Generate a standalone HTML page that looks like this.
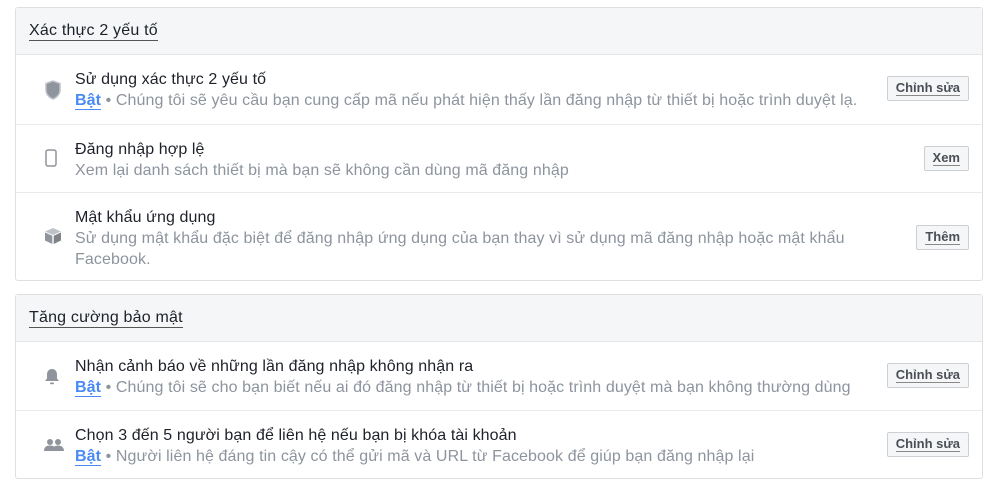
<!DOCTYPE html>
<html><head><meta charset="utf-8"><style>
*{box-sizing:border-box;margin:0;padding:0}
body{width:1000px;height:486px;background:#fff;font-family:"Liberation Sans",sans-serif;position:relative;overflow:hidden}
.p{position:absolute;left:15px;width:968px;border:1px solid #dddfe2;border-radius:3px;background:#fff}
.h{background:#f5f6f7;border-bottom:1px solid #e5e5e5;height:47px;padding:14px 0 0 13px;font-size:16px;color:#1d2129;letter-spacing:0.2px}
.h span{border-bottom:1px solid #555;padding-bottom:1px}
.r{position:relative;border-top:1px solid #e9ebee;padding:14px 110px 0 59px;font-size:16px;line-height:21px;letter-spacing:0.1px}
.t{color:#1d2129}
.d{color:#8d949e}
.b{color:#4a8af4;font-weight:bold;border-bottom:1px solid #4a8af4}
.btn{position:absolute;right:13px;height:25px;border:1px solid #ccd0d5;border-radius:2px;background:#f5f6f7;font-size:13px;font-weight:bold;color:#4b4f56;padding:0 8px;line-height:22px;letter-spacing:0}
.btn span{border-bottom:1px solid #888}
.ic{position:absolute;left:28px}
</style></head><body>
<div class="p" style="top:7px;height:274px">
<div class="h"><span>Xác thực 2 yếu tố</span></div>
<div class="r" style="height:69px;border-top:none"><svg class="ic" style="top:25px" width="18" height="20" viewBox="0 0 18 20"><path d="M9 1L2 3.5v6c0 4.5 3 7.8 7 9.5 4-1.7 7-5 7-9.5v-6z" fill="#90949c" stroke="#bec2c9" stroke-width="1.5"/></svg><div class="t">Sử dụng xác thực 2 yếu tố</div><div class="d"><span class="b">Bật</span> • Chúng tôi sẽ yêu cầu bạn cung cấp mã nếu phát hiện thấy lần đăng nhập từ thiết bị hoặc trình duyệt lạ.</div><div class="btn" style="top:21px"><span>Chỉnh sửa</span></div></div>
<div class="r" style="height:68px"><svg class="ic" style="top:24px" width="14" height="18"><rect x="2" y="1" width="10" height="16" rx="2" fill="none" stroke="#90949c" stroke-width="1.5"/></svg><div class="t">Đăng nhập hợp lệ</div><div class="d">Xem lại danh sách thiết bị mà bạn sẽ không cần dùng mã đăng nhập</div><div class="btn" style="top:21px"><span>Xem</span></div></div>
<div class="r" style="height:89px"><svg class="ic" style="top:34px" width="18" height="18" viewBox="0 0 18 18"><path d="M9 1l8 3.5-8 3.5-8-3.5z" fill="#bec2c9"/><path d="M1 5.5l7.3 3.2v8.3L1 13.5z" fill="#90949c"/><path d="M17 5.5l-7.3 3.2v8.3l7.3-3.5z" fill="#7f8389"/></svg><div class="t">Mật khẩu ứng dụng</div><div class="d">Sử dụng mật khẩu đặc biệt để đăng nhập ứng dụng của bạn thay vì sử dụng mã đăng nhập hoặc mật khẩu Facebook.</div><div class="btn" style="top:32px"><span>Thêm</span></div></div>
</div>
<div class="p" style="top:294px;height:185px">
<div class="h"><span>Tăng cường bảo mật</span></div>
<div class="r" style="height:68px;border-top:none"><svg class="ic" style="top:26px" width="16" height="18" viewBox="0 0 16 18"><path d="M8 1c-3 0-5 2.3-5 5.5v4L1 13h14l-2-2.5v-4C13 3.3 11 1 8 1z" fill="#90949c"/><rect x="6" y="14.5" width="4" height="1.8" rx=".9" fill="#90949c"/></svg><div class="t">Nhận cảnh báo về những lần đăng nhập không nhận ra</div><div class="d"><span class="b">Bật</span> • Chúng tôi sẽ cho bạn biết nếu ai đó đăng nhập từ thiết bị hoặc trình duyệt mà bạn không thường dùng</div><div class="btn" style="top:21px"><span>Chỉnh sửa</span></div></div>
<div class="r" style="height:68px"><svg class="ic" style="top:27px" width="20" height="14" viewBox="0 0 20 14"><circle cx="6" cy="4" r="3" fill="#90949c"/><circle cx="14" cy="4" r="3" fill="#90949c"/><path d="M0 13c0-4 2.5-5.5 6-5.5s6 1.5 6 5.5zM9 13c0-4 2-5.5 5-5.5s6 1.5 6 5.5z" fill="#90949c"/></svg><div class="t">Chọn 3 đến 5 người bạn để liên hệ nếu bạn bị khóa tài khoản</div><div class="d"><span class="b">Bật</span> • Người liên hệ đáng tin cậy có thể gửi mã và URL từ Facebook để giúp bạn đăng nhập lại</div><div class="btn" style="top:21px"><span>Chỉnh sửa</span></div></div>
</div>
</body></html>
